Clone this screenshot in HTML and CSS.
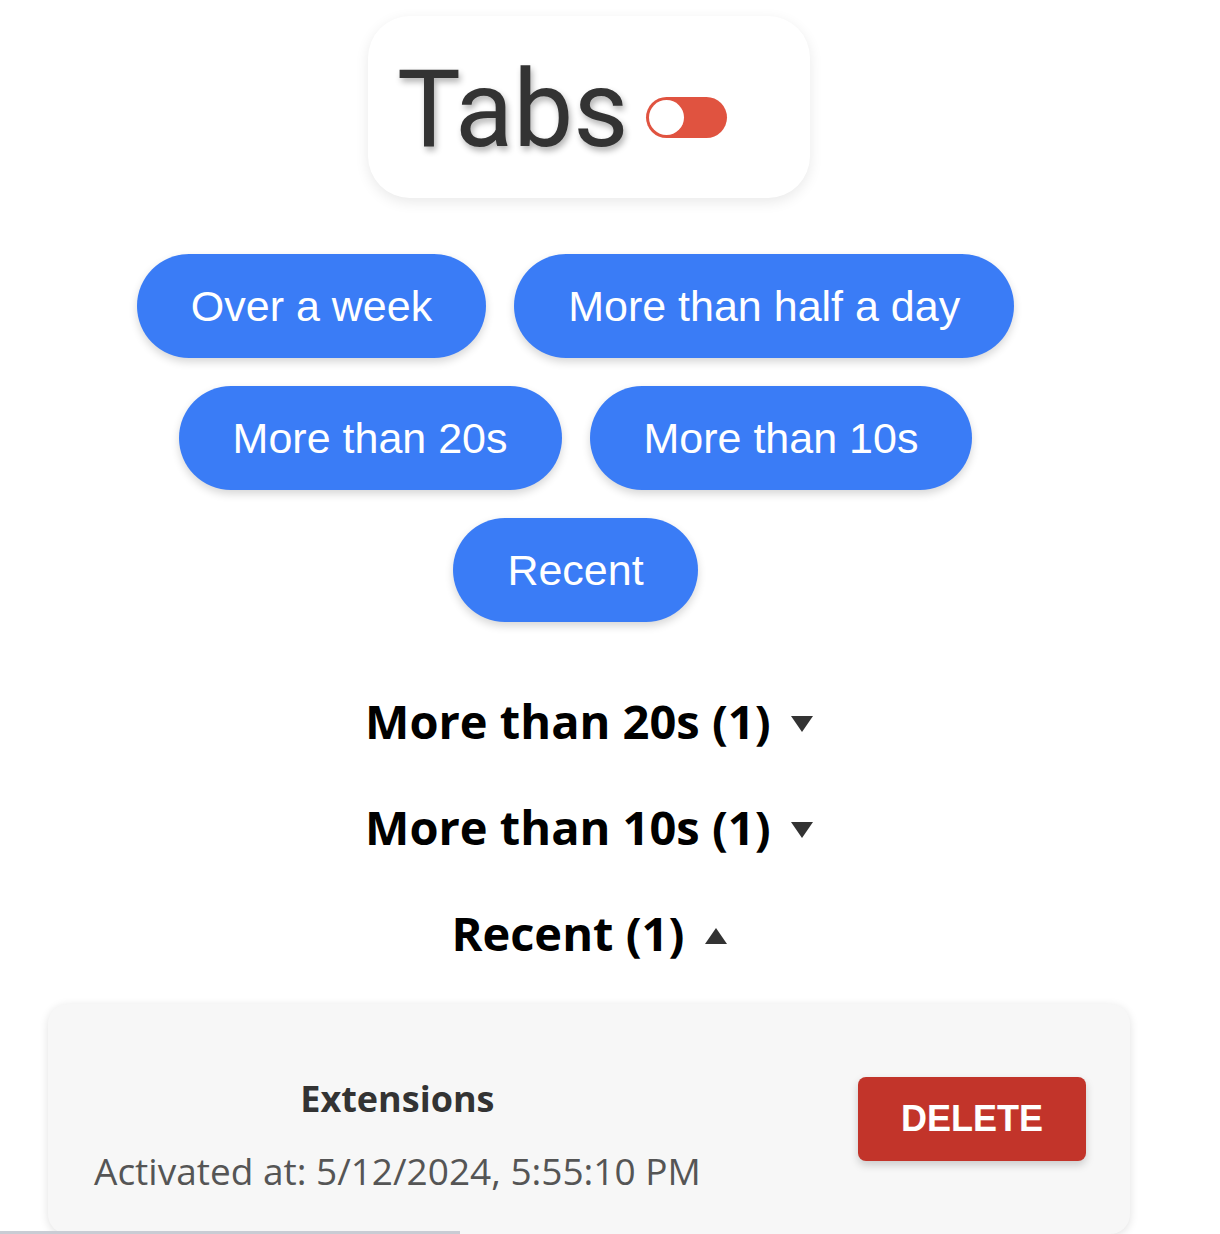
FILE: index.html
```html
<!DOCTYPE html>
<html>
<head>
<meta charset="utf-8">
<link rel="stylesheet" href="styles.css">
</head>
<body>
<main class="page">
  <header class="title-card">
    <h1 class="title">Tabs</h1>
    <span class="toggle"><span class="knob"></span></span>
  </header>

  <nav class="filters">
    <button class="pill">Over a week</button>
    <button class="pill">More than half a day</button>
    <button class="pill">More than 20s</button>
    <button class="pill">More than 10s</button>
    <button class="pill">Recent</button>
  </nav>

  <section class="groups">
    <h2 class="group">More than 20s (1) <span class="tri down"></span></h2>
    <h2 class="group">More than 10s (1) <span class="tri down"></span></h2>
    <h2 class="group">Recent (1) <span class="tri up"></span></h2>
  </section>

  <div class="tab-card">
    <div class="tab-info">
      <div class="tab-name">Extensions</div>
      <div class="tab-time">Activated at: 5/12/2024, 5:55:10 PM</div>
    </div>
    <button class="delete">DELETE</button>
  </div>
</main>
<div class="scroll-edge"></div>
</body>
</html>
```

FILE: styles.css
```css
html, body {
  margin: 0;
  padding: 0;
  background: #ffffff;
  overflow: hidden;
  height: 1234px;
}

.page {
  width: 1178px;
  display: flex;
  flex-direction: column;
  align-items: center;
}

.title-card {
  margin-top: 16px;
  width: 442px;
  height: 182px;
  box-sizing: border-box;
  border-radius: 42px;
  background: #ffffff;
  box-shadow: 0 4px 14px rgba(0, 0, 0, 0.09);
  display: flex;
  align-items: center;
  padding-left: 29px;
  gap: 18px;
}

.title {
  margin: 0;
  font-family: Roboto, "Liberation Sans", sans-serif;
  font-weight: 400;
  font-size: 107px;
  line-height: 1;
  color: #333333;
  text-shadow: 2px 4px 6px rgba(0, 0, 0, 0.3);
  position: relative;
  top: 2px;
}

.toggle {
  position: relative;
  top: 10px;
  width: 81px;
  height: 41px;
  border-radius: 21px;
  background: #e05340;
  display: inline-block;
}

.knob {
  position: absolute;
  left: 3px;
  top: 3px;
  width: 35px;
  height: 35px;
  border-radius: 50%;
  background: #ffffff;
}

.filters {
  margin-top: 56px;
  margin-left: -27px;
  width: 950px;
  display: flex;
  flex-wrap: wrap;
  justify-content: center;
  gap: 28px;
}

.pill {
  height: 104px;
  padding: 0 54px;
  border: none;
  border-radius: 52px;
  background: #3a7cf6;
  color: #ffffff;
  font-family: "Liberation Sans", Arial, sans-serif;
  font-size: 43px;
  box-shadow: 0 4px 8px rgba(0, 0, 0, 0.16);
}

.groups {
  margin-top: 46px;
  display: flex;
  flex-direction: column;
  align-items: center;
}

.group {
  margin: 0;
  height: 106px;
  display: flex;
  align-items: center;
  font-family: "Open Sans", "Noto Sans", sans-serif;
  font-weight: 700;
  font-size: 47px;
  color: #000000;
  white-space: pre;
}

.tri {
  display: inline-block;
  width: 0;
  height: 0;
  border-left: 11px solid transparent;
  border-right: 11px solid transparent;
  margin-left: 8px;
}

.tri.down {
  border-top: 16px solid #333333;
  margin-top: 6px;
}

.tri.up {
  border-bottom: 16px solid #333333;
  margin-top: 6px;
}

.tab-card {
  margin-top: 18px;
  width: 1082px;
  height: 230px;
  box-sizing: border-box;
  border-radius: 20px;
  background: #f7f7f7;
  box-shadow: 0 2px 10px rgba(0, 0, 0, 0.12);
  display: flex;
  align-items: center;
  justify-content: space-between;
  padding: 0 44px 0 46px;
  align-self: flex-start;
  margin-left: 48px;
}

.tab-info {
  display: flex;
  flex-direction: column;
  align-items: center;
  gap: 22px;
  margin-top: 32px;
}

.tab-name {
  font-family: "Open Sans", "Noto Sans", sans-serif;
  font-weight: 700;
  font-size: 36px;
  color: #333333;
}

.tab-time {
  font-family: "Open Sans", "Noto Sans", sans-serif;
  font-size: 37px;
  color: #555555;
}

.delete {
  width: 228px;
  height: 84px;
  border: none;
  border-radius: 8px;
  background: #c2342a;
  color: #ffffff;
  font-family: "Liberation Sans", Arial, sans-serif;
  font-weight: 700;
  font-size: 36px;
  box-shadow: 0 4px 8px rgba(0, 0, 0, 0.18);
}

.scroll-edge {
  position: absolute;
  left: 0;
  top: 1231px;
  width: 460px;
  height: 3px;
  background: #c9ccd4;
}
```
